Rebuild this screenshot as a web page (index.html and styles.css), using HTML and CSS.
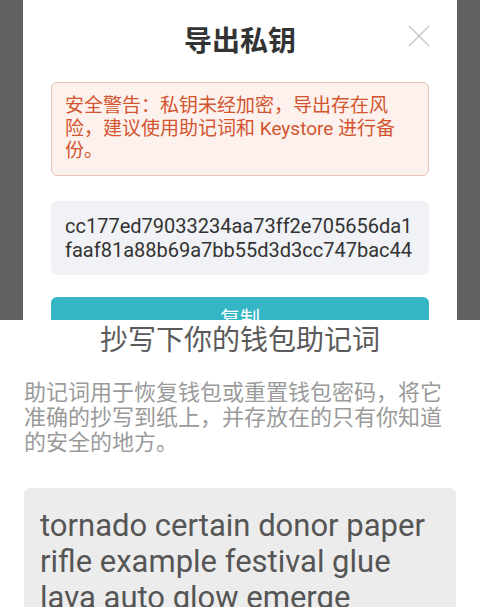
FILE: index.html
```html
<!DOCTYPE html>
<html lang="zh-CN">
<head>
<meta charset="utf-8">
<title>导出私钥</title>
<link rel="stylesheet" href="styles.css">
</head>
<body>
<section class="top">
  <div class="modal">
    <h1 class="modal-title">导出私钥</h1>
    <button class="close" aria-label="关闭">
      <svg width="22" height="22" viewBox="0 0 22 22"><path d="M1 1L21 21M21 1L1 21" stroke="#c8c8c8" stroke-width="1.5" fill="none"/></svg>
    </button>
    <div class="warning">安全警告：私钥未经加密，导出存在风险，建议使用助记词和 Keystore 进行备份。</div>
    <div class="key">cc177ed79033234aa73ff2e705656da1faaf81a88b69a7bb55d3d3cc747bac44</div>
    <button class="copy">复制</button>
  </div>
</section>
<section class="bottom">
  <h2 class="sub-title">抄写下你的钱包助记词</h2>
  <p class="desc">助记词用于恢复钱包或重置钱包密码，将它准确的抄写到纸上，并存放在的只有你知道的安全的地方。</p>
  <div class="mnemonic">tornado certain donor paper rifle example festival glue lava auto glow emerge</div>
</section>
</body>
</html>
```
FILE: styles.css
```css
* { box-sizing: border-box; }
html, body {
  margin: 0;
  padding: 0;
  width: 480px;
  height: 607px;
  overflow: hidden;
  background: #fff;
  font-family: Roboto, "Noto Sans CJK SC", sans-serif;
}
.top {
  height: 320px;
  overflow: hidden;
  background: #606060;
  padding: 0 23px;
}
.modal {
  position: relative;
  margin-top: -12px;
  background: #fff;
  border-radius: 12px;
  padding: 34px 28px 20px;
}
.modal-title {
  margin: 0;
  font-size: 28px;
  line-height: 40px;
  font-weight: 700;
  color: #333;
  text-align: center;
}
.close {
  position: absolute;
  top: 37px;
  right: 27px;
  width: 22px;
  height: 22px;
  padding: 0;
  border: 0;
  background: none;
  display: flex;
}
.warning {
  margin-top: 20px;
  background: #fdf1ed;
  border: 1px solid #e6c2b6;
  border-radius: 6px;
  padding: 12px 28px 12px 13px;
  font-size: 19px;
  line-height: 22.5px;
  color: #d2552f;
}
.key {
  margin-top: 25px;
  background: #f0f2f5;
  border-radius: 6px;
  padding: 13px 14px;
  font-size: 20px;
  line-height: 24px;
  color: #333;
  word-break: break-all;
}
.copy {
  display: block;
  width: 100%;
  margin-top: 22px;
  height: 44px;
  border: 0;
  border-radius: 6px;
  background: #35b6c5;
  color: #fff;
  font-family: inherit;
  font-size: 20px;
  line-height: 44px;
  padding: 0;
}
.bottom {
  padding: 1px 24px 0;
}
.sub-title {
  margin: 0;
  font-size: 28px;
  line-height: 40px;
  font-weight: 400;
  color: #5a5a5a;
  text-align: center;
}
.desc {
  margin: 19px 0 0;
  font-size: 22px;
  line-height: 25px;
  color: #9a9a9a;
}
.mnemonic {
  margin-top: 33px;
  background: #ececec;
  border-radius: 6px;
  padding: 20px 16px;
  font-size: 31px;
  line-height: 36px;
  color: #555;
}
```
